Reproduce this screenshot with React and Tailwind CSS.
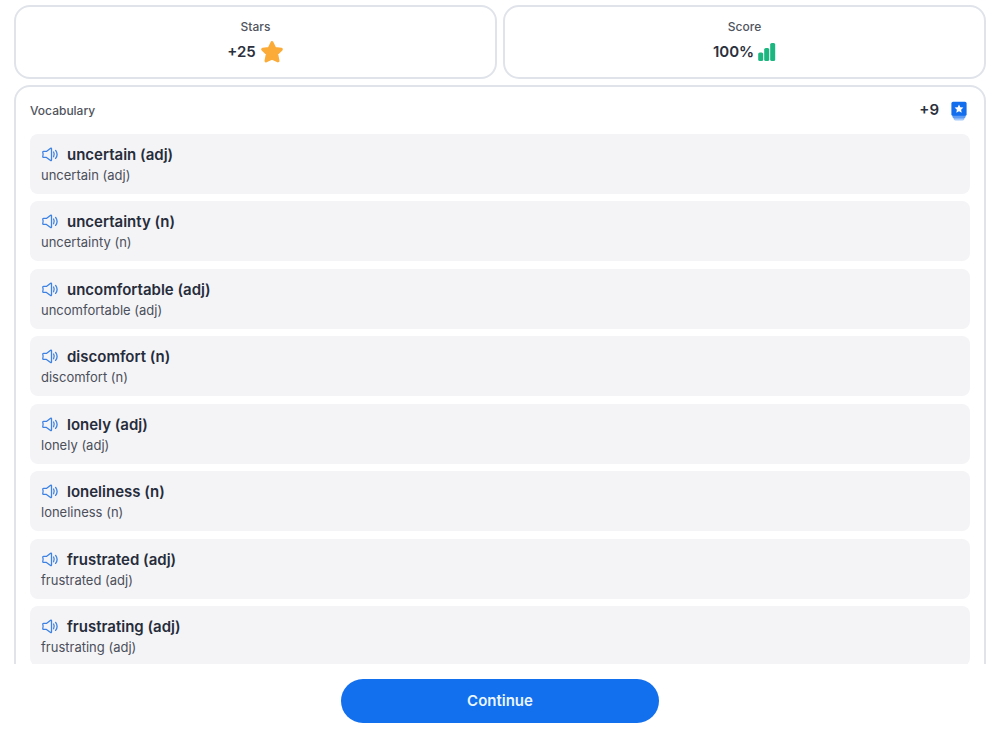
import React from "react";

const words = [
    "uncertain (adj)",
    "uncertainty (n)",
    "uncomfortable (adj)",
    "discomfort (n)",
    "lonely (adj)",
    "loneliness (n)",
    "frustrated (adj)",
    "frustrating (adj)",
];

const StarIcon = () => (
    <svg width="24" height="24" viewBox="0 0 24 24" fill="#fbab37" stroke="#fbab37" strokeWidth="3" strokeLinejoin="round" aria-hidden="true">
        <path d="M12 2.6 14.8 8.4 21.3 9.3 16.6 13.8 18 20.9 12 18.2 6 20.9 7.4 13.8 2.7 9.3 9.2 8.4Z" />
    </svg>
);

const BarsIcon = () => (
    <svg width="18" height="20" viewBox="0 0 18 20" fill="#1cb680" aria-hidden="true">
        <rect x="0.2" y="10.5" width="5" height="8.5" rx="1.6" />
        <rect x="6.2" y="6" width="5" height="13" rx="1.6" />
        <rect x="12.2" y="1" width="5" height="18" rx="1.6" />
    </svg>
);

const CardsIcon = () => (
    <svg width="16" height="20" viewBox="0 0 16 20" aria-hidden="true">
        <rect x="2.6" y="9" width="10.8" height="10.6" rx="1.8" fill="#a5cafa" />
        <rect x="1.4" y="6" width="13.2" height="11.4" rx="1.8" fill="#5f9df5" />
        <rect x="0.4" y="0.8" width="15.2" height="14" rx="1.6" fill="#136eee" />
        <path d="M8 3.4 9.3 6.3 12.4 6.6 10.1 8.8 10.7 11.8 8 10.3 5.3 11.8 5.9 8.8 3.6 6.6 6.7 6.3Z" fill="#fff" />
    </svg>
);

const SpeakerIcon = () => (
    <svg width="18" height="16" viewBox="0 0 18 16" fill="none" stroke="#3c82e2" strokeWidth="1.3" strokeLinecap="round" strokeLinejoin="round" aria-hidden="true">
        <path d="M2.6 4.4H5.4L9.6 1.3C10 1 10.5 1.2 10.5 1.7V13.1C10.5 13.6 10 13.8 9.6 13.5L5.4 10.4H2.6C2 10.4 1.6 10 1.8 9.4C2.3 8 2.3 6.8 1.8 5.4C1.6 4.8 2 4.4 2.6 4.4Z" />
        <path d="M12.6 5C13.4 6.4 13.4 8.4 12.6 9.8" />
        <path d="M14.6 3.4C16.4 5.8 16.4 9 14.6 11.4" />
    </svg>
);

const StatCard = ({ label, value, icon }) => (
    <div className="flex flex-1 flex-col items-center rounded-2xl border-2 border-[#e0e4ea] py-3">
        <span className="text-[12px] leading-4 font-medium text-[#50545e]">{label}</span>
        <div className="mt-1 flex h-[26px] items-center gap-1 text-[15px] font-semibold text-[#2b303c]">
            <span>{value}</span>
            {icon}
        </div>
    </div>
);

const WordRow = ({ word }) => (
    <li className="rounded-lg bg-[#f4f4f7] px-[11px] py-[10px] odd:mb-[7px] even:mb-2">
        <div className="flex items-center gap-2">
            <button type="button" aria-label={`Play ${word}`} className="cursor-pointer">
                <SpeakerIcon />
            </button>
            <span className="text-[15px] leading-[22px] font-semibold text-[#262c3a]">{word}</span>
        </div>
        <p className="text-[13px] leading-[18px] text-[#4b4f59]">{word}</p>
    </li>
);

const App = () => {
    return (
        <div className="flex h-screen flex-col bg-white font-['Inter','Liberation_Sans',sans-serif]">
            <main className="min-h-0 flex-1 overflow-y-auto px-[14px] pt-[5px] [scrollbar-width:none]">
                {/* Results */}
                <div className="flex gap-[6px]">
                    <StatCard label="Stars" value="+25" icon={<StarIcon />} />
                    <StatCard label="Score" value="100%" icon={<BarsIcon />} />
                </div>

                {/* Vocabulary list */}
                <section className="mt-[6px] rounded-2xl border-2 border-[#e0e4ea] px-[14px] pb-[6px]">
                    <div className="flex h-[47px] items-center justify-between">
                        <h2 className="text-[12px] font-medium text-[#50545e]">Vocabulary</h2>
                        <div className="flex items-center gap-3 pr-[3px] text-[15px] font-semibold text-[#2b303c]">
                            <span>+9</span>
                            <CardsIcon />
                        </div>
                    </div>
                    <ul>
                        {words.map((word) => (
                            <WordRow key={word} word={word} />
                        ))}
                    </ul>
                </section>
            </main>

            <footer className="flex justify-center px-4 pt-[15px] pb-[7px]">
                <button type="button" className="h-11 w-full max-w-[318px] cursor-pointer rounded-full bg-[#126fee] text-[15px] font-semibold text-[#eaf6ff]">
                    Continue
                </button>
            </footer>
        </div>
    );
};

export default App;
